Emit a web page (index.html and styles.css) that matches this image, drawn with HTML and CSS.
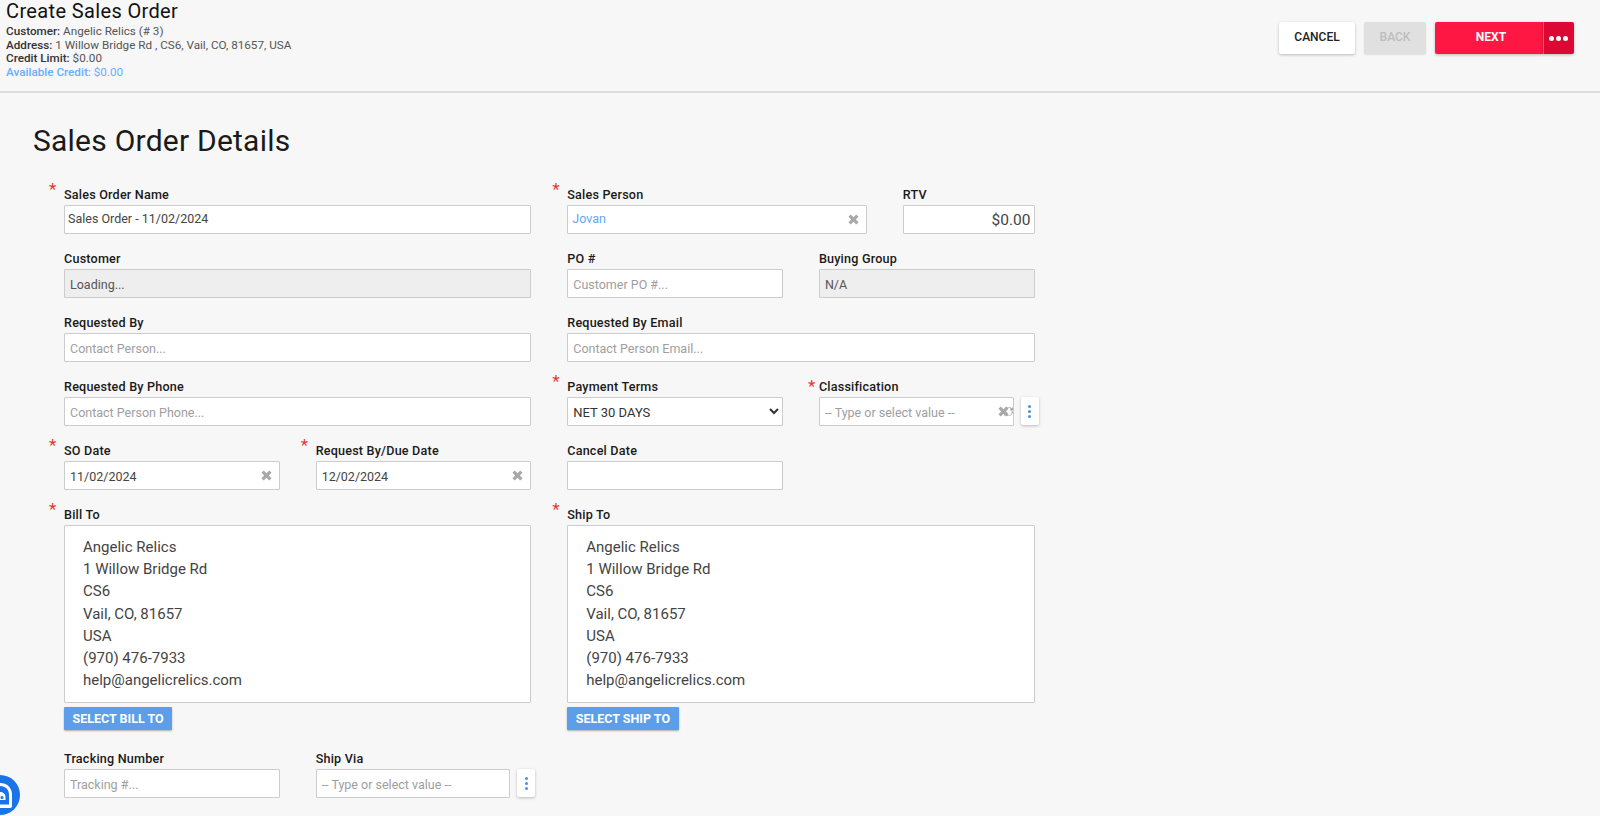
FILE: index.html
```html
<!DOCTYPE html>
<html lang="en">
  <head>
    <meta charset="UTF-8" />
    <meta name="viewport" content="width=device-width, initial-scale=1.0" />
    <title>Create Sales Order</title>
    <link rel="stylesheet" href="styles.css">
  </head>
  <body>
    <!-- Page header -->
    <header class="page-header">
      <div class="summary">
        <h1>Create Sales Order</h1>
        <p><b>Customer:</b> Angelic Relics (# 3)</p>
        <p><b>Address:</b> 1 Willow Bridge Rd , CS6, Vail, CO, 81657, USA</p>
        <p><b>Credit Limit:</b> $0.00</p>
        <p class="credit-ok"><b>Available Credit:</b> $0.00</p>
      </div>
      <div class="actions">
        <button class="btn btn-cancel" type="button">Cancel</button>
        <button class="btn btn-back" type="button" disabled>Back</button>
        <div class="split">
          <button class="btn btn-next" type="button">Next</button>
          <button class="btn btn-more" type="button" aria-label="More"><i></i><i></i><i></i></button>
        </div>
      </div>
    </header>

    <main class="content">
      <h2>Sales Order Details</h2>

      <form class="form-grid">
        <div class="field span-6 req">
          <label>Sales Order Name</label>
          <input class="input input-name" type="text" value="Sales Order - 11/02/2024">
        </div>
        <div class="field span-4 req">
          <label>Sales Person</label>
          <div class="with-clear">
            <input class="input input-link" type="text" value="Jovan">
            <svg class="clear" viewBox="0 0 12 12"><path d="M3 .5 6 3.500 9 .5 11.500 3 8.500 6 11.500 9 9 11.500 6 8.500 3 11.500 .5 9 3.500 6 .5 3z"/></svg>
          </div>
        </div>
        <div class="field span-2">
          <label>RTV</label>
          <input class="input input-money" type="text" value="$0.00">
        </div>

        <div class="field span-6">
          <label>Customer</label>
          <input class="input" type="text" value="Loading..." disabled>
        </div>
        <div class="field span-3">
          <label>PO #</label>
          <input class="input" type="text" placeholder="Customer PO #...">
        </div>
        <div class="field span-3">
          <label>Buying Group</label>
          <input class="input" type="text" value="N/A" disabled>
        </div>

        <div class="field span-6">
          <label>Requested By</label>
          <input class="input" type="text" placeholder="Contact Person...">
        </div>
        <div class="field span-6">
          <label>Requested By Email</label>
          <input class="input" type="text" placeholder="Contact Person Email...">
        </div>

        <div class="field span-6">
          <label>Requested By Phone</label>
          <input class="input" type="text" placeholder="Contact Person Phone...">
        </div>
        <div class="field span-3 req">
          <label>Payment Terms</label>
          <select class="input select"><option>NET 30 DAYS</option></select>
        </div>
        <div class="field span-3 req req-near">
          <label>Classification</label>
          <div class="with-menu">
            <div class="with-clear">
              <input class="input" type="text" placeholder="-- Type or select value --">
              <svg class="clear clear-left" viewBox="0 0 12 12"><path d="M3 .5 6 3.500 9 .5 11.500 3 8.500 6 11.500 9 9 11.500 6 8.500 3 11.500 .5 9 3.500 6 .5 3z"/></svg>
              <svg class="reload" viewBox="0 0 12 12"><path d="M1 6a5 5 0 0 1 8.500-3.500L11 1v4H7l1.500-1.500A3 3 0 0 0 3 6z"/><path d="M11 6a5 5 0 0 1-8.500 3.500L1 11V7h4L3.500 8.500A3 3 0 0 0 9 6z"/></svg>
            </div>
            <button class="kebab" type="button" aria-label="Options"><i></i><i></i><i></i></button>
          </div>
        </div>

        <div class="field span-3 req">
          <label>SO Date</label>
          <div class="with-clear">
            <input class="input" type="text" value="11/02/2024">
            <svg class="clear" viewBox="0 0 12 12"><path d="M3 .5 6 3.500 9 .5 11.500 3 8.500 6 11.500 9 9 11.500 6 8.500 3 11.500 .5 9 3.500 6 .5 3z"/></svg>
          </div>
        </div>
        <div class="field span-3 req">
          <label>Request By/Due Date</label>
          <div class="with-clear">
            <input class="input" type="text" value="12/02/2024">
            <svg class="clear" viewBox="0 0 12 12"><path d="M3 .5 6 3.500 9 .5 11.500 3 8.500 6 11.500 9 9 11.500 6 8.500 3 11.500 .5 9 3.500 6 .5 3z"/></svg>
          </div>
        </div>
        <div class="field span-3">
          <label>Cancel Date</label>
          <input class="input" type="text">
        </div>
        <div class="span-3"></div>

        <div class="field span-6 req">
          <label>Bill To</label>
          <div class="address">
            <div>Angelic Relics</div>
            <div>1 Willow Bridge Rd</div>
            <div>CS6</div>
            <div>Vail, CO, 81657</div>
            <div>USA</div>
            <div>(970) 476-7933</div>
            <div>help@angelicrelics.com</div>
          </div>
          <button class="btn-select" type="button">Select Bill To</button>
        </div>
        <div class="field span-6 req">
          <label>Ship To</label>
          <div class="address">
            <div>Angelic Relics</div>
            <div>1 Willow Bridge Rd</div>
            <div>CS6</div>
            <div>Vail, CO, 81657</div>
            <div>USA</div>
            <div>(970) 476-7933</div>
            <div>help@angelicrelics.com</div>
          </div>
          <button class="btn-select" type="button">Select Ship To</button>
        </div>

        <div class="field span-3 row-last">
          <label>Tracking Number</label>
          <input class="input" type="text" placeholder="Tracking #...">
        </div>
        <div class="field span-3 row-last">
          <label>Ship Via</label>
          <div class="with-menu">
            <input class="input" type="text" placeholder="-- Type or select value --">
            <button class="kebab" type="button" aria-label="Options"><i></i><i></i><i></i></button>
          </div>
        </div>
      </form>
    </main>

    <!-- Floating support widget, cut off by the window edge -->
    <div class="support-widget">
      <svg viewBox="0 0 40 40">
        <path d="M20 8c7 0 12 4.500 12 12v11q0 2-2 2H20z" fill="#fff"/>
        <path d="M20 11c5.500 0 9 3.500 9 9v9.500H20z" fill="#1a73e8"/>
        <path d="M20 17c3 0 5.500 2 5.500 5v3H20z" fill="#fff"/>
        <circle cx="22" cy="22.500" r="1.500" fill="#1a73e8"/>
      </svg>
    </div>
  </body>
</html>
```

FILE: styles.css
```css
/* ---------- Reset & Base ---------- */
*{box-sizing:border-box;margin:0;padding:0;}
html,body{height:100%;overflow:hidden;}
body{background:#f7f7f7;color:#212121;font-family:Roboto,"Liberation Sans",sans-serif;font-size:12px;}

/* ---------- Header ---------- */
.page-header{display:flex;justify-content:space-between;height:93px;padding:0 26px 0 6px;border-bottom:2px solid #dcdcdc;}
.summary h1{font-size:20px;font-weight:400;line-height:23px;margin-bottom:2px;letter-spacing:.36px;color:#111;}
.summary p{font-size:11.7px;line-height:13.6px;color:#555;}
.summary b{font-weight:500;color:#333;}
.summary .credit-ok,.summary .credit-ok b{color:#64b0ff;}

.actions{display:flex;gap:9px;align-items:flex-start;padding-top:22px;}
.btn{display:block;height:32px;padding-bottom:2px;border:none;border-radius:2px;font-family:inherit;font-size:12px;font-weight:500;text-transform:uppercase;box-shadow:0 1px 3px rgba(0,0,0,.25);}
.btn-cancel{width:76px;background:#fff;color:#212121;}
.btn-back{width:62px;background:#e0e0e0;color:#bdbdbd;box-shadow:0 1px 2px rgba(0,0,0,.1);}
.split{display:flex;}
.btn-next{width:108px;padding-left:4px;background:#ff1744;color:#fff;border-radius:2px 0 0 2px;font-weight:700;}
.btn-more{display:flex;align-items:center;justify-content:center;gap:2px;width:31px;padding:0 2px 0 0;background:#dd0733;border-radius:0 2px 2px 0;border-left:1px solid #ff4d6e;}
.btn-more i{width:5px;height:5px;border-radius:50%;background:#fff;}

/* ---------- Form ---------- */
.content{padding:28px 0 0 33px;}
h2{font-size:30px;font-weight:400;line-height:40px;letter-spacing:.23px;color:#1a1a1a;}
.form-grid{display:grid;grid-template-columns:repeat(12,1fr);column-gap:36px;width:970.5px;margin:21px 0 0 31px;}
.span-2{grid-column:span 2;}
.span-3{grid-column:span 3;}
.span-4{grid-column:span 4;}
.span-6{grid-column:span 6;}

.field{position:relative;padding-bottom:12px;}
.field label{display:block;height:23px;padding-top:6px;font-size:12.6px;font-weight:500;line-height:14px;letter-spacing:.2px;color:#1a1a1a;}
.req::before{content:"*";position:absolute;left:-15px;top:-4px;font-size:17px;line-height:22px;color:#e53935;}
.req-near::before{left:-11px;top:1px;}
.row-last{padding-top:4px;}

.input{display:block;width:100%;height:29px;padding:2px 5px 0;background:#fff;border:1px solid #ccc;border-radius:1px;font-family:inherit;font-size:12.5px;color:#444;outline:none;}
.input::placeholder{color:#9e9e9e;opacity:1;}
.input:disabled{background:#eee;color:#555;}
.input-name{padding:0 3px 2px;}
.input-link{color:#64a5f5;padding:0 4px 3px;}
.input-money{text-align:right;font-size:15.5px;padding:0 3px 0 5px;}
.select{padding-left:1px;font-size:13px;color:#333;}

.with-clear{position:relative;flex:1;}
.clear,.reload{position:absolute;width:11px;height:11px;top:9px;right:8px;fill:#a8a8a8;}
.clear-left{right:5px;}
.reload{right:0;}

.with-menu{display:flex;align-items:flex-start;gap:7px;margin-right:-4px;}
.with-menu > .input{flex:1;}
.kebab{display:flex;flex-direction:column;align-items:center;justify-content:center;gap:2px;flex:none;width:18px;height:28px;background:#fff;border:none;border-radius:2px;box-shadow:0 1px 3px rgba(0,0,0,.25);}
.kebab i{width:3px;height:3px;border-radius:50%;background:#4a90e2;}

.address{height:178px;padding:10px 18px;background:#fff;border:1px solid #ccc;border-radius:1px;font-size:15px;line-height:22.2px;color:#444;}
.btn-select{display:block;height:23px;margin-top:4px;padding:0 8.5px;background:#5c9ee9;border:none;border-radius:1px;color:#fff;font-family:inherit;font-size:12.5px;font-weight:700;text-transform:uppercase;box-shadow:0 1px 2px rgba(0,0,0,.3);}

/* ---------- Support widget ---------- */
.support-widget{position:fixed;left:-20px;top:775px;width:40px;height:40px;border-radius:50%;background:#1a73e8;}
.support-widget svg{display:block;width:40px;height:40px;}
```
